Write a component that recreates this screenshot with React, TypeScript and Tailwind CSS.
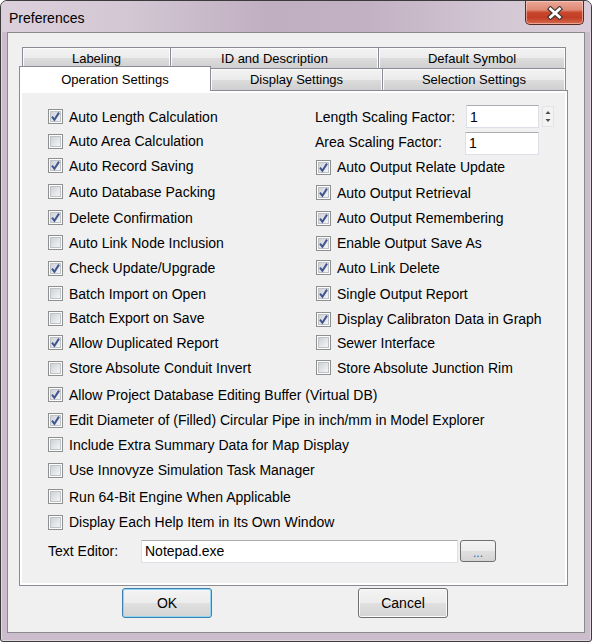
import React from "react";

type Row = { label: string; checked: boolean; h: string };

const leftRows: Row[] = [
  { label: "Auto Length Calculation", checked: true, h: "h-[25px]" },
  { label: "Auto Area Calculation", checked: false, h: "h-[24px]" },
  { label: "Auto Record Saving", checked: true, h: "h-[25px]" },
  { label: "Auto Database Packing", checked: false, h: "h-[27px]" },
  { label: "Delete Confirmation", checked: true, h: "h-[25px]" },
  { label: "Auto Link Node Inclusion", checked: false, h: "h-[25px]" },
  { label: "Check Update/Upgrade", checked: true, h: "h-[26px]" },
  { label: "Batch Import on Open", checked: false, h: "h-[25px]" },
  { label: "Batch Export on Save", checked: false, h: "h-[24px]" },
  { label: "Allow Duplicated Report", checked: true, h: "h-[25px]" },
  { label: "Store Absolute Conduit Invert", checked: false, h: "h-[26px]" },
];

const rightRows: Row[] = [
  { label: "Auto Output Relate Update", checked: true, h: "h-[26px]" },
  { label: "Auto Output Retrieval", checked: true, h: "h-[25px]" },
  { label: "Auto Output Remembering", checked: true, h: "h-[26px]" },
  { label: "Enable Output Save As", checked: true, h: "h-[24px]" },
  { label: "Auto Link Delete", checked: true, h: "h-[25px]" },
  { label: "Single Output Report", checked: true, h: "h-[27px]" },
  { label: "Display Calibraton Data in Graph", checked: true, h: "h-[24px]" },
  { label: "Sewer Interface", checked: false, h: "h-[23px]" },
  { label: "Store Absolute Junction Rim", checked: false, h: "h-[27px]" },
];

const fullRows: Row[] = [
  { label: "Allow Project Database Editing Buffer (Virtual DB)", checked: true, h: "h-[27px]" },
  { label: "Edit Diameter of (Filled) Circular Pipe in inch/mm in Model Explorer", checked: true, h: "h-[24px]" },
  { label: "Include Extra Summary Data for Map Display", checked: false, h: "h-[25px]" },
  { label: "Use Innovyze Simulation Task Manager", checked: false, h: "h-[26px]" },
  { label: "Run 64-Bit Engine When Applicable", checked: false, h: "h-[27px]" },
  { label: "Display Each Help Item in Its Own Window", checked: false, h: "h-[24px]" },
];

function Check({ checked }: { checked: boolean }) {
  return (
    <svg width="15" height="15" viewBox="0 0 15 15" className="shrink-0">
      <defs>
        <linearGradient id="cbfill" x1="0" y1="0" x2="1" y2="1">
          <stop offset="0" stopColor="#cbcfd5" />
          <stop offset="1" stopColor="#f7f7f7" />
        </linearGradient>
      </defs>
      <rect x="0.5" y="0.5" width="14" height="14" fill="#fdfdfd" stroke="#8e8f8f" />
      <rect x="2.5" y="2.5" width="10" height="10" fill="url(#cbfill)" stroke="#bfc3c8" />
      {checked && (
        <path
          d="M4 7.6 L6.4 10.8 L11 3.6"
          fill="none"
          stroke="#41558f"
          strokeWidth="2"
          strokeLinejoin="miter"
        />
      )}
    </svg>
  );
}

function CheckRow({ row }: { row: Row }) {
  return (
    <div className={`flex items-center ${row.h}`}>
      <Check checked={row.checked} />
      <span className="ml-[6px] whitespace-nowrap text-[14px] leading-[16px]">{row.label}</span>
    </div>
  );
}

function CloseButton() {
  return (
    <div className="mr-[7px] flex h-[24px] w-[59px] items-center justify-center rounded-b-[5px] border border-t-0 border-[#5a2a22] bg-[linear-gradient(#eba797_0%,#de8b77_38%,#c9472d_50%,#c13e25_72%,#d8694e_100%)] shadow-[inset_0_0_0_1px_rgba(255,215,205,0.55)]">
      <svg width="18" height="14" viewBox="0 0 18 14">
        <path d="M4.5 3 L13.5 11 M13.5 3 L4.5 11" stroke="#3a3434" strokeWidth="5" strokeLinecap="square" />
        <path d="M4.5 3 L13.5 11 M13.5 3 L4.5 11" stroke="#ffffff" strokeWidth="2.8" strokeLinecap="square" />
      </svg>
    </div>
  );
}

const tabBase =
  "flex items-center justify-center border border-b-0 border-[#898c95] text-[13px] leading-[15px] whitespace-nowrap bg-[linear-gradient(#f3f3f3_0%,#ebebeb_50%,#dddddd_50%,#cfcfcf_100%)] shadow-[inset_1px_1px_0_#fbfbfb,inset_-1px_0_0_#fbfbfb]";

const btnBase =
  "flex h-[30px] w-[90px] items-center justify-center rounded-[3px] border text-[14px] leading-[16px] bg-[linear-gradient(#f4f4f4_0%,#ececec_50%,#e0e0e0_50%,#d4d4d4_100%)]";

function Spinner() {
  return (
    <svg width="12" height="21" viewBox="0 0 12 21" className="ml-[3px] shrink-0">
      <rect x="0.5" y="0.5" width="11" height="20" fill="#f3f3f3" stroke="#e4e4e4" />
      <path d="M3.5 8 L6 5 L8.5 8 Z" fill="#4d4d4d" />
      <path d="M3.5 13 L6 16 L8.5 13 Z" fill="#4d4d4d" />
    </svg>
  );
}

const inputCls =
  "flex items-center border border-[#dde1e7] border-t-[#abadb3] bg-white pl-[3px] text-[14px] leading-[16px]";

export default function App() {
  return (
    <div className="h-[642px] w-[592px] bg-white font-['Liberation_Sans',Arial,sans-serif] text-black">
      <div className="flex h-full w-full flex-col rounded-t-[7px] rounded-b-[3px] border border-[#3b3b3b] bg-[#cbbdcb] shadow-[inset_0_0_0_1px_rgba(255,255,255,0.4)]">
        {/* Title bar */}
        <div className="flex h-[31px] shrink-0 items-start justify-between rounded-t-[6px] bg-[linear-gradient(90deg,#dbd0db_0%,#d3c7d4_22%,#c0afc1_45%,#c2b1c3_62%,#d4c8d5_85%,#d9cdd9_100%)]">
          <span className="pl-[8px] pt-[9px] text-[14px] leading-[16px]">Preferences</span>
          <CloseButton />
        </div>

        {/* Client area */}
        <div className="mx-[6px] mb-[8px] flex flex-1 flex-col border border-[#8a8a8a] bg-[#f0f0f0]">
          <div className="ml-[11px] mt-[14px] flex w-[549px] flex-col">
            {/* Back tab row */}
            <div className="flex h-[21px] pl-[3px]">
              <div className={`${tabBase} w-[149px]`}>Labeling</div>
              <div className={`${tabBase} -ml-px w-[209px]`}>ID and Description</div>
              <div className={`${tabBase} -ml-px w-[188px]`}>Default Symbol</div>
            </div>
            {/* Front tab row */}
            <div className="flex h-[22px] items-end">
              <div className="relative z-10 -mb-px flex h-[25px] w-[192px] items-center justify-center border border-b-0 border-[#898c95] bg-white text-[13px] leading-[15px]">
                Operation Settings
              </div>
              <div className={`${tabBase} -ml-px h-[22px] w-[173px]`}>Display Settings</div>
              <div className={`${tabBase} -ml-px h-[22px] w-[184px]`}>Selection Settings</div>
            </div>
            {/* Panel */}
            <div className="h-[496px] border border-[#898c95] bg-white p-[2px]">
              <div className="flex h-full flex-col bg-[#f0f0f0] pl-[26px] pt-[11px]">
                <div className="flex">
                  <div className="flex w-[267px] flex-col">
                    {leftRows.map((r) => (
                      <CheckRow key={r.label} row={r} />
                    ))}
                  </div>
                  <div className="flex flex-col">
                    <div className="flex h-[25px] items-center">
                      <span className="w-[151px] text-[14px] leading-[16px]">Length Scaling Factor:</span>
                      <div className={`${inputCls} h-[23px] w-[73px]`}>1</div>
                      <Spinner />
                    </div>
                    <div className="flex h-[25px] items-center">
                      <span className="w-[150px] text-[14px] leading-[16px]">Area Scaling Factor:</span>
                      <div className={`${inputCls} mt-[3px] h-[23px] w-[74px]`}>1</div>
                    </div>
                    <div className="flex flex-col pl-px">
                      {rightRows.map((r) => (
                        <CheckRow key={r.label} row={r} />
                      ))}
                    </div>
                  </div>
                </div>
                <div className="flex flex-col">
                  {fullRows.map((r) => (
                    <CheckRow key={r.label} row={r} />
                  ))}
                </div>
                <div className="flex h-[34px] items-center">
                  <span className="w-[93px] text-[14px] leading-[16px]">Text Editor:</span>
                  <div className={`${inputCls} h-[23px] w-[317px]`}>Notepad.exe</div>
                  <div className="ml-[2px] flex h-[22px] w-[36px] items-center justify-center rounded-[3px] border border-[#707070] bg-[linear-gradient(#f4f4f4_0%,#ececec_50%,#e0e0e0_50%,#d4d4d4_100%)] text-[12px] leading-[14px] text-[#2a62b8]">
                    <span className="pt-[3px]">...</span>
                  </div>
                </div>
              </div>
            </div>
          </div>

          {/* Buttons */}
          <div className="mt-[2px] flex pl-[114px]">
            <div className={`${btnBase} border-[#3c7fb1] shadow-[inset_0_0_0_1px_#8fd6f2]`}>OK</div>
            <div className={`${btnBase} ml-[146px] border-[#707070] shadow-[inset_0_0_0_1px_#fafafa]`}>Cancel</div>
          </div>
        </div>
      </div>
    </div>
  );
}
